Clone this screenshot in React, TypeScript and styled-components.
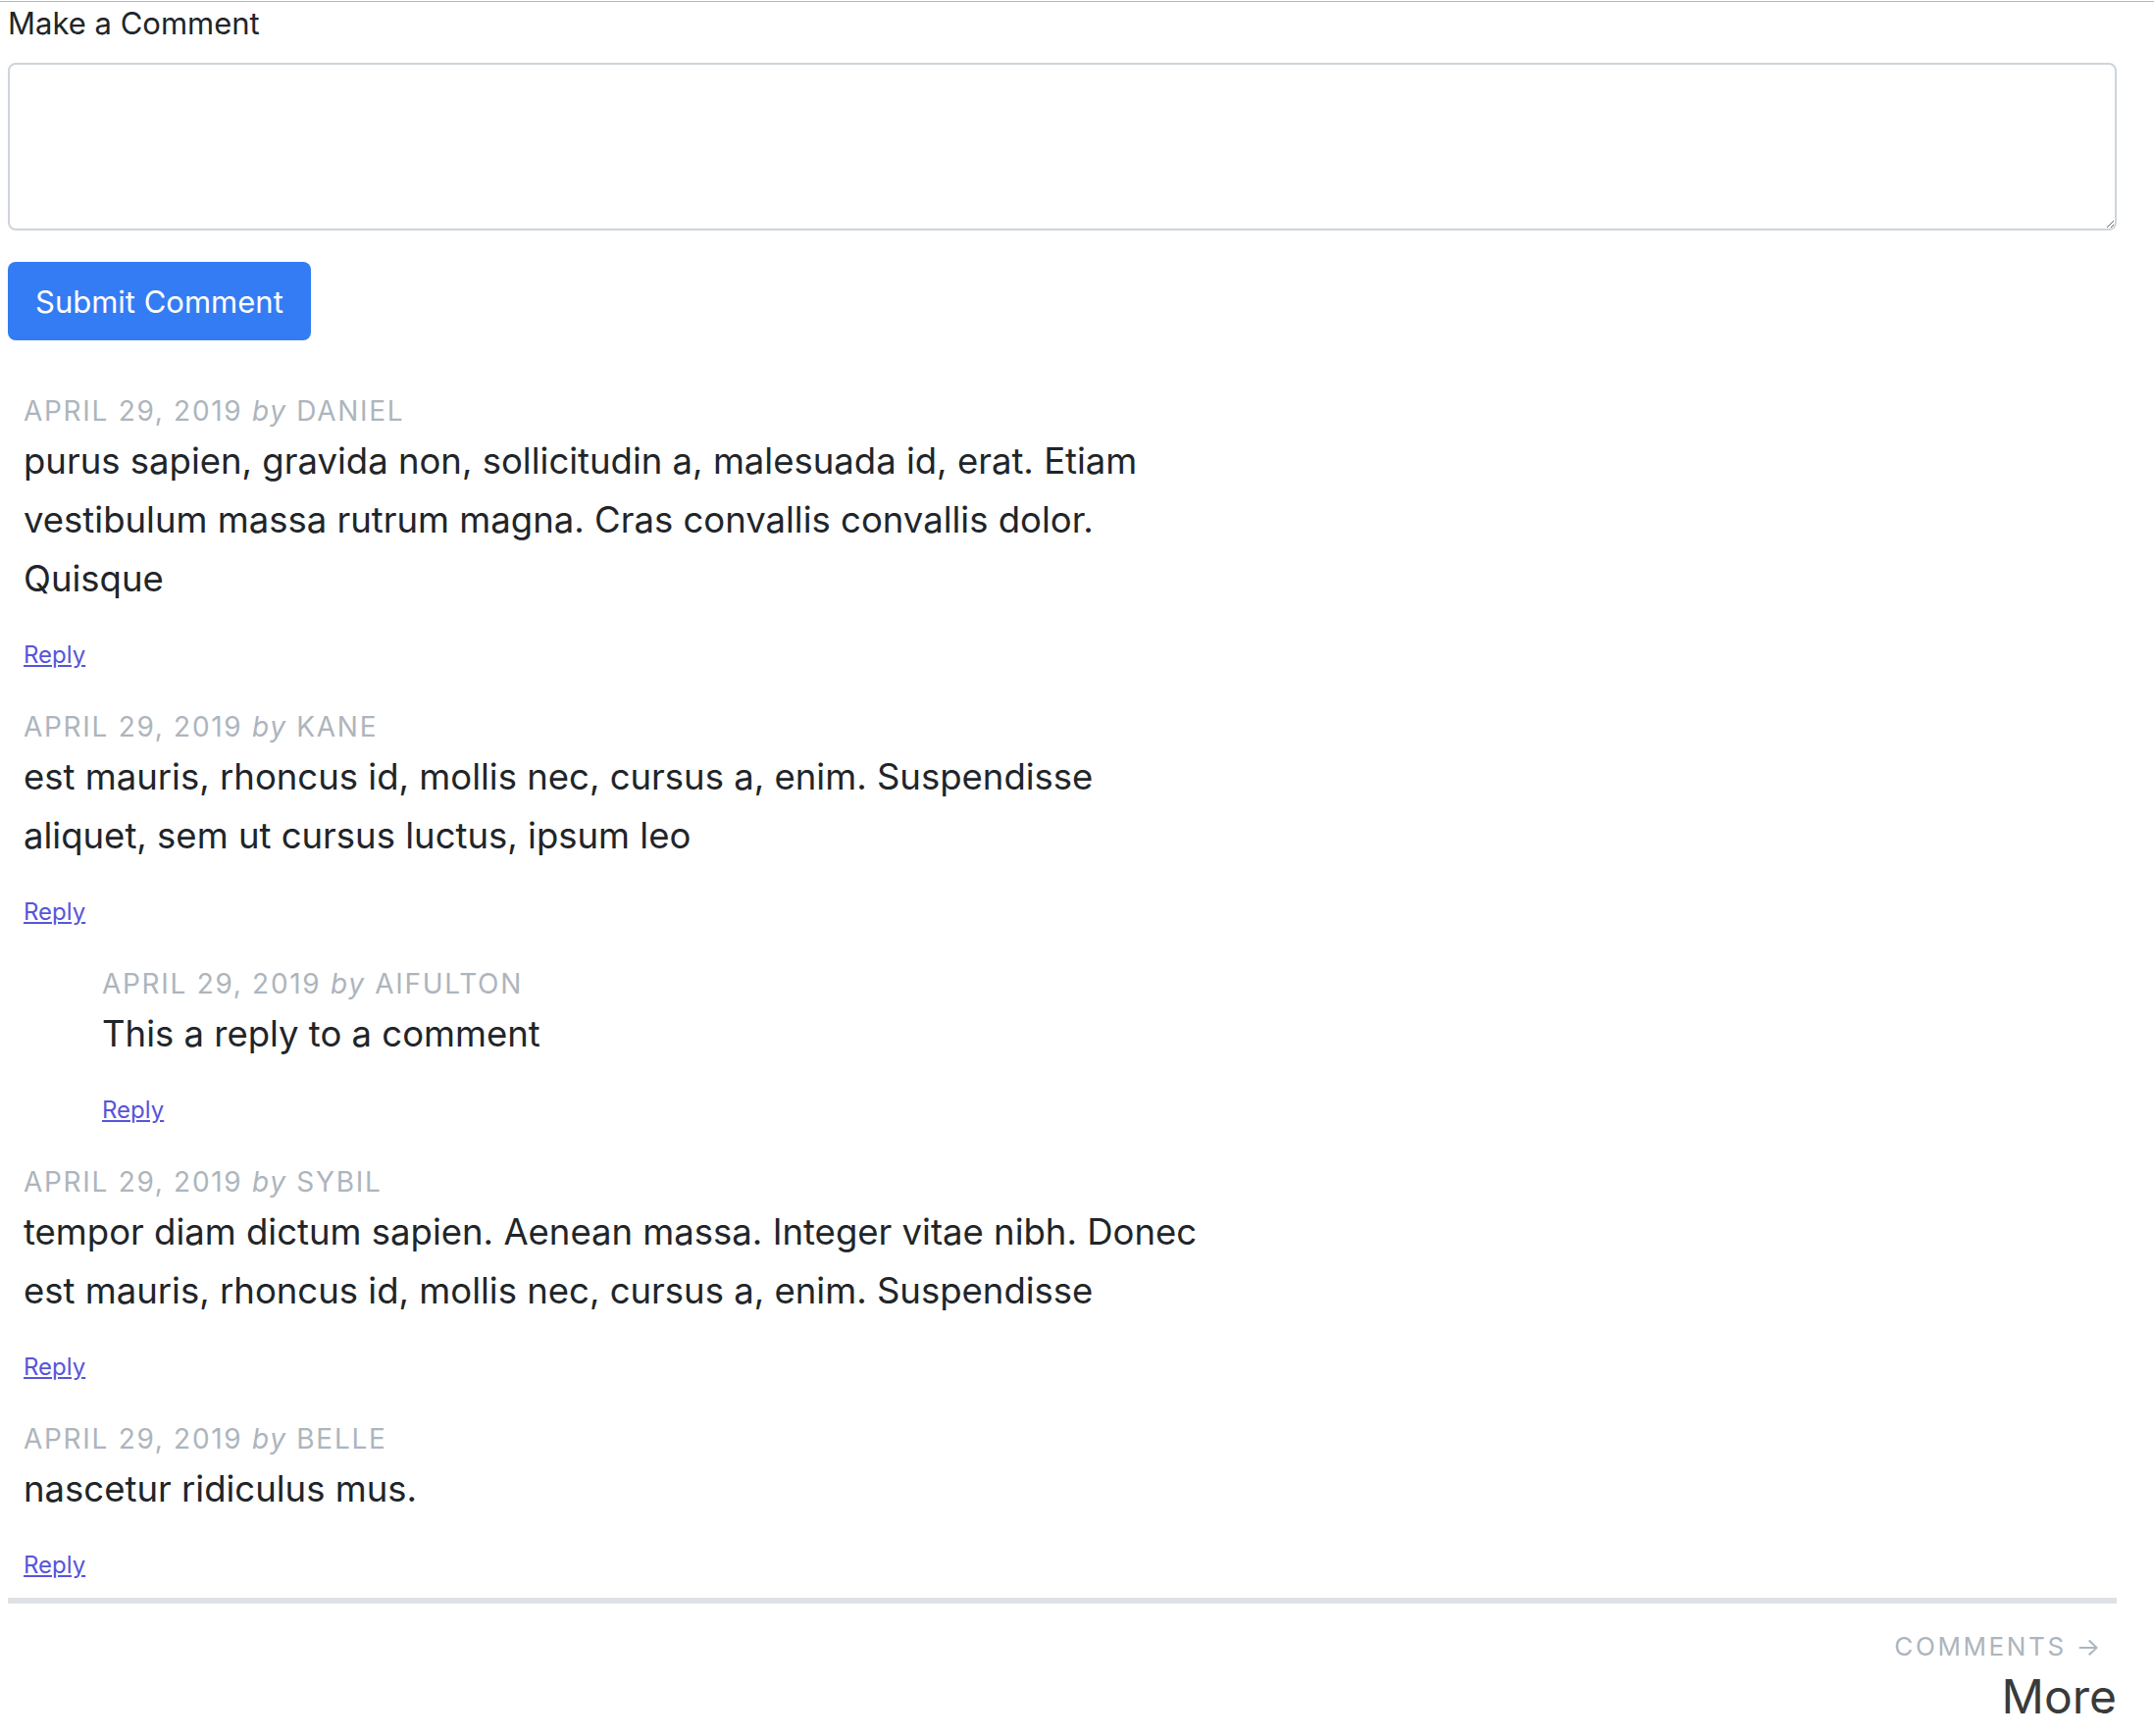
import React from "react";
import styled, { createGlobalStyle } from "styled-components";

const GlobalStyle = createGlobalStyle`
  html, body {
    margin: 0;
    padding: 0;
    background: #fff;
  }
  body {
    font-family: Inter, "Liberation Sans", Arial, sans-serif;
    color: #212529;
  }
`

interface CommentData {
  id: number;
  author: string;
  date: string;
  text: string;
  replies?: CommentData[];
}

const comments: CommentData[] = [
  {
    id: 1,
    author: "Daniel",
    date: "April 29, 2019",
    text: "purus sapien, gravida non, sollicitudin a, malesuada id, erat. Etiam vestibulum massa rutrum magna. Cras convallis convallis dolor. Quisque",
  },
  {
    id: 2,
    author: "Kane",
    date: "April 29, 2019",
    text: "est mauris, rhoncus id, mollis nec, cursus a, enim. Suspendisse aliquet, sem ut cursus luctus, ipsum leo",
    replies: [
      {
        id: 3,
        author: "aifulton",
        date: "April 29, 2019",
        text: "This a reply to a comment",
      },
    ],
  },
  {
    id: 4,
    author: "Sybil",
    date: "April 29, 2019",
    text: "tempor diam dictum sapien. Aenean massa. Integer vitae nibh. Donec est mauris, rhoncus id, mollis nec, cursus a, enim. Suspendisse",
  },
  {
    id: 5,
    author: "Belle",
    date: "April 29, 2019",
    text: "nascetur ridiculus mus.",
  },
];

const Page = styled.div`
  border-top: 1px solid #b6b6b6;
  margin-top: 1px;
  padding: 0 38px 0 8px;
`

const Label = styled.label`
  display: block;
  font-size: 31px;
  line-height: 44px;
  color: #212529;
  margin-bottom: 18px;
`

const TextArea = styled.textarea`
  display: block;
  box-sizing: border-box;
  width: 100%;
  height: 171px;
  border: 2px solid #ced4da;
  border-radius: 8px;
  padding: 12px 20px;
  font-family: inherit;
  font-size: 32px;
  background: #fff;
  outline: none;
`

const SubmitButton = styled.button`
  margin-top: 32px;
  height: 80px;
  padding: 0 28px;
  border: none;
  border-radius: 8px;
  background: #347cf4;
  color: #fff;
  font-family: inherit;
  font-size: 31px;
  cursor: pointer;
`

const CommentList = styled.div`
  display: flex;
  flex-direction: column;
  gap: 34px;
  margin-top: 51px;
  padding-left: 16px;
`

const CommentItem = styled.div<{ $nested?: boolean }>`
  display: flex;
  flex-direction: column;
  margin-left: ${({ $nested }) => ($nested ? "80px" : "0")};
`

const Meta = styled.div`
  font-size: 28px;
  line-height: 42px;
  letter-spacing: 1.7px;
  color: #adb5bd;
  text-transform: uppercase;

  em {
    text-transform: none;
    font-style: italic;
  }
`

const Body = styled.p`
  margin: 0 0 30px;
  max-width: 1212px;
  font-size: 36.5px;
  line-height: 60px;
  color: #212529;
`

const ReplyLink = styled.a`
  align-self: flex-start;
  font-size: 24px;
  line-height: 36px;
  color: #5755d9;
  text-decoration: underline;
  cursor: pointer;
`

const Footer = styled.div`
  margin-top: 15px;
  border-top: 6px solid #dee2e6;
  display: flex;
  flex-direction: column;
  align-items: flex-end;
  padding-top: 23px;
`

const FooterLabel = styled.div`
  font-size: 26px;
  line-height: 42px;
  letter-spacing: 2.6px;
  color: #adb5bd;
  text-transform: uppercase;
  padding-right: 14px;
`

const FooterTitle = styled.div`
  font-size: 48px;
  line-height: 60px;
  color: #3a3a3a;
`

const Comment: React.FC<{ data: CommentData; nested?: boolean }> = ({ data, nested }) => (
  <>
    <CommentItem $nested={nested}>
      <Meta>
        {data.date} <em>by</em> {data.author}
      </Meta>
      <Body>{data.text}</Body>
      <ReplyLink href="#">Reply</ReplyLink>
    </CommentItem>
    {data.replies?.map((r) => (
      <Comment key={r.id} data={r} nested />
    ))}
  </>
);

const App: React.FC = () => (
  <>
    <GlobalStyle />
    <Page>
      <Label htmlFor="comment">Make a Comment</Label>
      <TextArea id="comment" />
      <SubmitButton>Submit Comment</SubmitButton>

      <CommentList>
        {comments.map((c) => (
          <Comment key={c.id} data={c} />
        ))}
      </CommentList>

      <Footer>
        <FooterLabel>Comments →</FooterLabel>
        <FooterTitle>More</FooterTitle>
      </Footer>
    </Page>
  </>
);

export default App;
